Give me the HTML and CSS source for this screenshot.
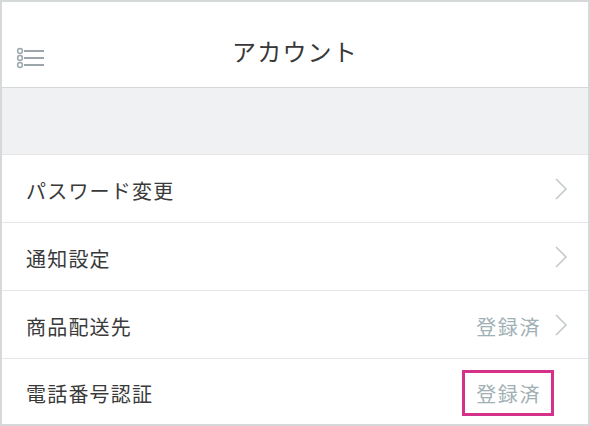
FILE: index.html
```html
<!DOCTYPE html>
<html lang="ja">
<head>
<meta charset="utf-8">
<link rel="stylesheet" href="styles.css">
</head>
<body>
<div class="frame">
  <header class="header">
    <svg class="menu-icon" width="30" height="22" viewBox="0 0 30 22" fill="none" stroke="#9ba6ac">
      <circle cx="4" cy="4" r="2.4" stroke-width="1.5"/>
      <circle cx="4" cy="11" r="2.4" stroke-width="1.5"/>
      <circle cx="4" cy="18" r="2.4" stroke-width="1.5"/>
      <line x1="8" y1="4" x2="28" y2="4" stroke-width="2"/>
      <line x1="8" y1="11" x2="28" y2="11" stroke-width="2"/>
      <line x1="8" y1="18" x2="28" y2="18" stroke-width="2"/>
    </svg>
    <h1 class="title">アカウント</h1>
    <span class="spacer"></span>
  </header>
  <div class="band"></div>
  <ul class="list">
    <li class="row"><span class="label">パスワード変更</span><span class="right"><span class="chev"><svg width="14" height="22" viewBox="0 0 14 22" fill="none"><polyline points="2,1 12,11 2,21" stroke="#c3c9cc" stroke-width="1.6"/></svg></span></span></li>
    <li class="row"><span class="label">通知設定</span><span class="right"><span class="chev"><svg width="14" height="22" viewBox="0 0 14 22" fill="none"><polyline points="2,1 12,11 2,21" stroke="#c3c9cc" stroke-width="1.6"/></svg></span></span></li>
    <li class="row"><span class="label">商品配送先</span><span class="right"><span class="value">登録済</span><span class="chev"><svg width="14" height="22" viewBox="0 0 14 22" fill="none"><polyline points="2,1 12,11 2,21" stroke="#c3c9cc" stroke-width="1.6"/></svg></span></span></li>
    <li class="row last"><span class="label">電話番号認証</span><span class="right"><span class="value marked">登録済</span><span class="chev empty"></span></span></li>
  </ul>
</div>
</body>
</html>
```
FILE: styles.css
```css
* { box-sizing: border-box; }
html, body { margin: 0; padding: 0; }
body {
  width: 590px;
  height: 426px;
  background: #d5d9da;
  font-family: "Noto Sans CJK JP", "Noto Sans", sans-serif;
  font-weight: 400;
  color: #353535;
}
.frame {
  width: 590px;
  height: 426px;
  border: 2px solid #d5d9da;
  background: #ffffff;
  display: flex;
  flex-direction: column;
  overflow: hidden;
}
.header {
  height: 86px;
  flex: none;
  display: flex;
  align-items: center;
  padding: 13px 0 0 14px;
  border-bottom: 1px solid #d4d8d9;
  background: #fff;
}
.menu-icon { margin-top: 13px; flex: none; }
.spacer { width: 30px; flex: none; margin-right: 14px; }
.title {
  flex: 1;
  margin: 0;
  text-align: center;
  font-size: 24px;
  font-weight: 400;
  letter-spacing: 1.2px;
  line-height: 28px;
  color: #383838;
}
.band {
  height: 66px;
  flex: none;
  background: #f0f1f3;
}
.list {
  list-style: none;
  margin: 0;
  padding: 0;
  flex: 1;
  display: flex;
  flex-direction: column;
}
.row {
  height: 68px;
  flex: none;
  border-top: 1px solid #e4e6e7;
  display: flex;
  align-items: center;
  justify-content: space-between;
  padding: 0 20px 0 24px;
}
.row.last { flex: 1; }
.label {
  font-size: 20px;
  letter-spacing: 1.2px;
  color: #3a3a3a;
  padding-top: 3px;
}
.right { display: flex; align-items: center; }
.value {
  position: relative;
  font-size: 20px;
  letter-spacing: 1.6px;
  color: #a1b0b5;
  padding-top: 3px;
}
.marked::after {
  content: "";
  position: absolute;
  left: -14px;
  right: -13px;
  top: -6px;
  bottom: -8px;
  border: 3.5px solid #d6318a;
}
.chev { display: flex; width: 14px; margin-left: 13px; }
.chev.empty { height: 22px; }
```
